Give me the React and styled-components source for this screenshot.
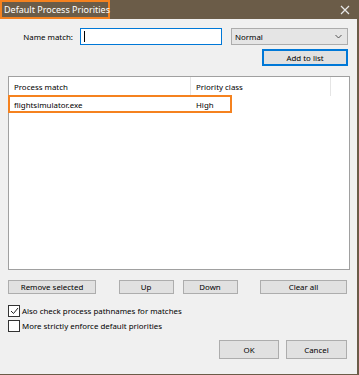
import React from "react";
import styled, { createGlobalStyle } from "styled-components";

const Global = createGlobalStyle`
  html, body { margin: 0; padding: 0; background: #f0f0f0; }
  body { font-family: "Noto Sans", "Open Sans", sans-serif; font-size: 7.9px; color: #000; }
  * { box-sizing: border-box; }
`;

const Window = styled.div`
  width: 359px;
  height: 375px;
  display: flex;
  flex-direction: column;
  background: #f0f0f0;
  border-right: 2px solid #6b5c48;
  border-bottom: 1px solid #6b5c48;
`;

const TitleBar = styled.div`
  height: 19px;
  flex: none;
  background: #6b5c48;
  display: flex;
  align-items: center;
  justify-content: space-between;
  padding-right: 7px;
`;

const Title = styled.div`
  height: 19px;
  display: flex;
  align-items: center;
  padding: 0 2px;
  color: #fff;
  font-size: 9px;
  white-space: nowrap;
  border: 2px solid #f5821f;
  width: 110px;
`;

const Close = styled.svg`
  width: 10px;
  height: 10px;
`;

const Body = styled.div`
  flex: 1;
  display: flex;
  flex-direction: column;
  padding: 9px 8px 0 8px;
`;

const Row = styled.div`
  display: flex;
  align-items: center;
  justify-content: ${(p) => p.$justify || "flex-start"};
  gap: ${(p) => p.$gap || 0}px;
  margin-top: ${(p) => p.$mt || 0}px;
  padding-left: ${(p) => p.$pl || 0}px;
  padding-right: ${(p) => p.$pr || 0}px;
`;

const Label = styled.span`
  width: 65px;
  text-align: right;
  padding-right: 7px;
`;

const Input = styled.div`
  width: 142px;
  height: 17px;
  background: #fff;
  border: 1px solid #0078d7;
  display: flex;
  align-items: center;
  padding-left: 3px;
  &::after {
    content: "";
    width: 1px;
    height: 11px;
    background: #000;
  }
`;

const Select = styled.div`
  width: 117px;
  height: 17px;
  margin-left: 9px;
  background: #e5e5e5;
  border: 1px solid #acacac;
  display: flex;
  align-items: center;
  justify-content: space-between;
  padding: 0 5px 0 3px;
`;

const Button = styled.div`
  width: ${(p) => p.$w}px;
  height: ${(p) => p.$h || 14}px;
  background: #e1e1e1;
  border: ${(p) => (p.$default ? "2px solid #0078d7" : "1px solid #adadad")};
  display: flex;
  align-items: center;
  justify-content: center;
`;

const List = styled.div`
  margin-top: 10px;
  height: 194px;
  width: 342px;
  background: #fff;
  border: 1px solid #a0a0a0;
  display: flex;
  flex-direction: column;
`;

const HeaderRow = styled.div`
  height: 19px;
  display: flex;
  align-items: center;
`;

const Col = styled.div`
  width: ${(p) => p.$w}px;
  height: 100%;
  display: flex;
  align-items: center;
  padding-left: 5px;
  border-right: ${(p) => (p.$line ? "1px solid #e5e5e5" : "none")};
`;

const DataRow = styled.div`
  height: 17px;
  display: flex;
  align-items: center;
  position: relative;
`;

const Highlight = styled.div`
  position: absolute;
  left: -1px;
  top: -1px;
  width: 224px;
  height: 18px;
  border: 2px solid #f5821f;
  pointer-events: none;
`;

const Check = styled.div`
  display: flex;
  align-items: center;
  gap: 2px;
  margin-top: ${(p) => p.$mt}px;
`;

const Box = styled.div`
  width: 12px;
  height: 12px;
  border: 1px solid #333;
  background: #fff;
  display: flex;
  align-items: center;
  justify-content: center;
`;

export default function App() {
  return (
    <>
      <Global />
      <Window>
        <TitleBar>
          <Title>Default Process Priorities</Title>
          <Close viewBox="0 0 10 10">
            <path d="M1 1L9 9M9 1L1 9" stroke="#e8e8e8" strokeWidth="1.2" />
          </Close>
        </TitleBar>
        <Body>
          <Row $pl={7}>
            <Label>Name match:</Label>
            <Input />
            <Select>
              <span>Normal</span>
              <svg width="7" height="5" viewBox="0 0 7 5">
                <path d="M0.5 1L3.5 4L6.5 1" fill="none" stroke="#444" strokeWidth="0.9" />
              </svg>
            </Select>
          </Row>
          <Row $justify="flex-end" $mt={4} $pr={1}>
            <Button $w={86} $h={17} $default>Add to list</Button>
          </Row>
          <List>
            <HeaderRow>
              <Col $w={182} $line>Process match</Col>
              <Col $w={140} $line>Priority class</Col>
            </HeaderRow>
            <DataRow>
              <Highlight />
              <Col $w={182}>flightsimulator.exe</Col>
              <Col $w={140}>High</Col>
            </DataRow>
          </List>
          <Row $mt={10} $justify="space-between" $pr={2}>
            <Button $w={88}>Remove selected</Button>
            <Row $gap={9}>
              <Button $w={55}>Up</Button>
              <Button $w={55}>Down</Button>
            </Row>
            <Button $w={87}>Clear all</Button>
          </Row>
          <Check $mt={11}>
            <Box>
              <svg width="9" height="8" viewBox="0 0 9 8">
                <path d="M1 4L3.5 6.5L8 1" fill="none" stroke="#222" strokeWidth="1" />
              </svg>
            </Box>
            <span>Also check process pathnames for matches</span>
          </Check>
          <Check $mt={3}>
            <Box />
            <span>More strictly enforce default priorities</span>
          </Check>
          <Row $mt={8} $justify="flex-end" $gap={7} $pr={2}>
            <Button $w={60} $h={19}>OK</Button>
            <Button $w={61} $h={19}>Cancel</Button>
          </Row>
        </Body>
      </Window>
    </>
  );
}
